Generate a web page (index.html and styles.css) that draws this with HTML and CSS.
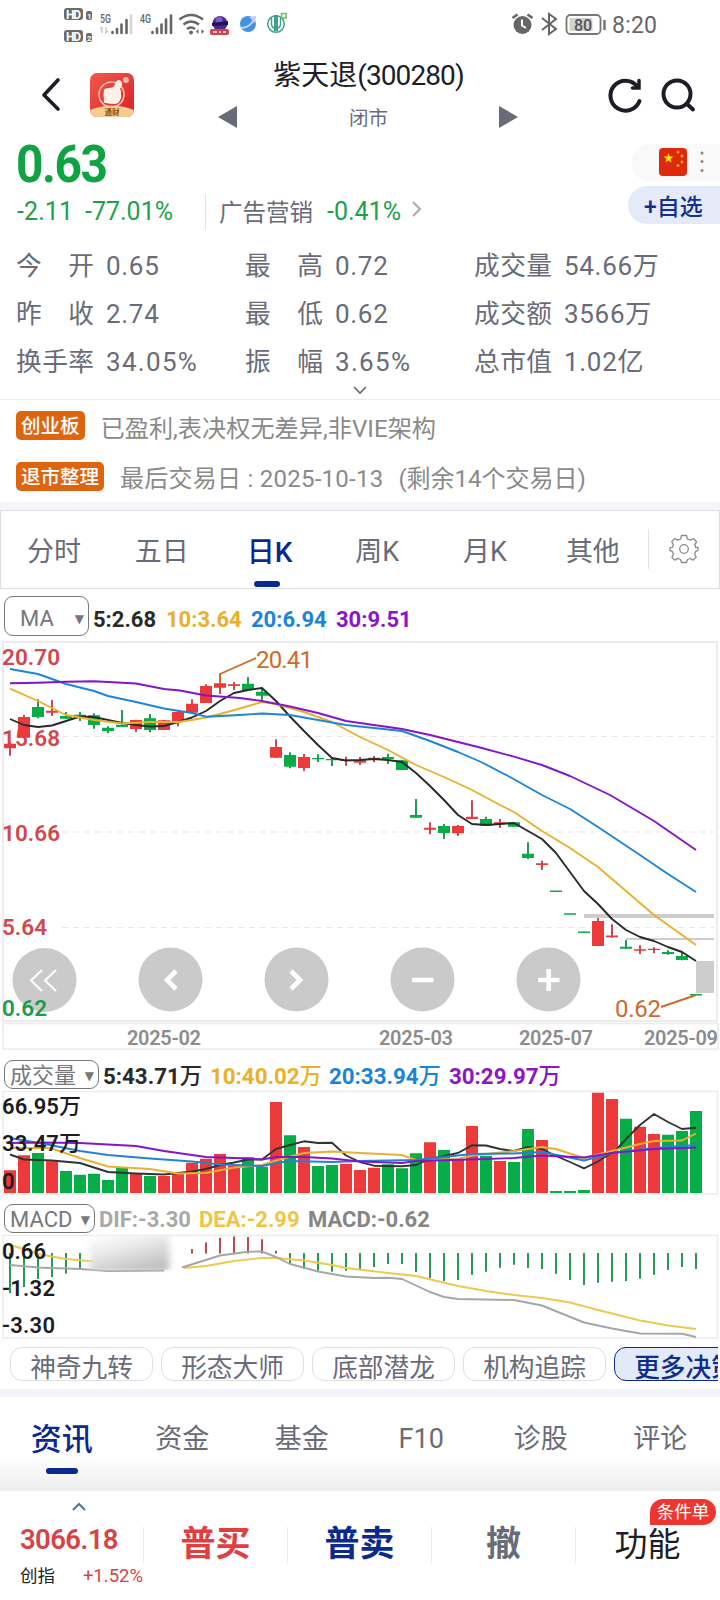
FILE: index.html
```html
<!DOCTYPE html>
<html lang="zh-CN">
<head>
<meta charset="utf-8">
<title>紫天退(300280)</title>
<link rel="stylesheet" href="styles.css">
</head>
<body>
<div class="app">
  <div class="status">
    <svg class="status-left" width="230" height="50" viewBox="60 0 230 50">
      <g fill="#6b6b6b"><rect x="64" y="8" width="19" height="12" rx="3"/><rect x="64" y="30" width="19" height="12" rx="3"/><rect x="86" y="11" width="6" height="9" rx="2"/><rect x="86" y="33" width="6" height="9" rx="2"/></g>
      <g class="st" font-weight="700" fill="#fff"><text x="66" y="18.500" font-size="12" textLength="15">HD</text><text x="66" y="40.500" font-size="12" textLength="15">HD</text><text x="87" y="18.500" font-size="8">1</text><text x="87" y="40.500" font-size="8">2</text></g>
      <g class="st" fill="#666" font-weight="500" font-size="12"><text x="100" y="23" textLength="11" lengthAdjust="spacingAndGlyphs">5G</text><text x="140" y="23" textLength="11" lengthAdjust="spacingAndGlyphs">4G</text></g>
      <g stroke="#666" stroke-width="2.600" stroke-linecap="round"><path d="M112.500 32v1M117 29v4M121.500 24.500v8.500M126.500 20v13M152.500 32v1M157 28.500v4.500M161.500 24.500v8.500M166 19.500v13.500M171 15.500v17.500"/><path stroke="#d6d6d6" d="M131 15.500v17.500"/></g>
      <path d="M102 27v6m-2-4 2-2M106 27v6l2-2" stroke="#ccc" stroke-width="1.500" fill="none"/>
      <g fill="none" stroke="#666" stroke-width="2.600"><path d="M179.500 19.500q11.500-9 23.500 0M183.500 24.500q7.500-6 15.500 0M187 29q4-3 8 0"/></g><circle cx="191" cy="32.500" r="2" fill="#666"/><path d="M198.500 29v5l-2.500-2.500zM201.500 29v5l2.500-2.500z" fill="#666"/>
      <circle cx="220" cy="23.500" r="7.500" fill="#4a2c91"/><circle cx="219" cy="20" r="3.500" fill="#7a5fc0"/><path d="M212 23l16-2v4l-16 1z" fill="#221450"/><rect x="210" y="29" width="19" height="6" rx="2" fill="#d63e4a"/><path d="M213 32h4M219 32h2M223 32h3" stroke="#fff" stroke-width="1.500"/>
      <circle cx="248" cy="24" r="8" fill="#4290e8"/><path d="M241 28q9 0 14-10" stroke="#bfe0ff" stroke-width="1.800" fill="none"/><path d="M249 17l7-1-1 7z" fill="#cfc5f4"/>
      <circle cx="276" cy="24" r="8.300" fill="none" stroke="#3fa08e" stroke-width="1.500"/><path d="M271.500 18v6q0 3 2.500 4M280.500 18v6q0 3-2.500 4" stroke="#3fa08e" stroke-width="1.400" fill="none"/><path d="M276 15v16" stroke="#3fa08e" stroke-width="4"/><rect x="281.500" y="13.500" width="4.500" height="4.500" fill="none" stroke="#6cc24a" stroke-width="1.500"/>
    </svg>
    <svg class="status-right" width="150" height="50" viewBox="510 0 150 50">
      <circle cx="522.500" cy="25" r="9" fill="#666"/><path d="M522 19.500v6l4 2.500" fill="none" stroke="#fff" stroke-width="2"/><path d="M512.500 18l5-3.500M532.500 18l-5-3.500" stroke="#666" stroke-width="2.600"/>
      <path d="M542 18l14 11-7 5V14l7 5-14 11" fill="none" stroke="#666" stroke-width="2"/>
      <rect x="566.500" y="15" width="34" height="19" rx="4" fill="#fff" stroke="#777" stroke-width="1.800"/><rect x="569.500" y="18" width="23" height="13" fill="#d2d2d2"/><path d="M604.500 20v10" stroke="#777" stroke-width="2.500"/>
      <text class="st" x="574" y="30.500" font-size="16" font-weight="500" fill="#555">80</text>
      <text class="st" x="612" y="33" font-size="23" fill="#666" textLength="45">8:20</text>
    </svg>
  </div>

  <header class="header">
    <div class="header-left">
      <svg width="20" height="36" viewBox="0 0 20 36"><path d="M17 3 3 18l14 14" fill="none" stroke="#1d1d28" stroke-width="3.600" stroke-linecap="round" stroke-linejoin="round"/></svg>
      <svg class="logo" width="44" height="44" viewBox="0 0 44 44"><defs><clipPath id="lc"><rect width="44" height="44" rx="7"/></clipPath><linearGradient id="lg" x2="1" y2="1"><stop stop-color="#f2594a"/><stop offset="1" stop-color="#dc1f28"/></linearGradient></defs><g clip-path="url(#lc)"><rect width="44" height="44" fill="url(#lg)"/><circle cx="21.500" cy="21.500" r="12.500" fill="none" stroke="#f9c0b0" stroke-width="1.600"/><path d="M0 37q22-9 44 0v8H0z" fill="#f3cd92"/><path d="M14 17q1-2 5-2 5 0 6-4 1-4 4-4 4 1 3 5l-2 4q2 2 1 5 1 4-1 6-1 4-6 4-5 0-8-1-3 0-2-4-1-4 0-9z" fill="#fff0e8"/><circle cx="36" cy="7" r="3" fill="#f9b9ac"/><text x="14.500" y="41.500" font-size="7.500" fill="#8b4d12" font-weight="700" class="cj">通财</text></g></svg>
    </div>
    <svg width="20" height="24" class="arrow" viewBox="0 0 20 24"><path d="M0 12 19 1v22z" fill="#696b78"/></svg>
    <div class="header-mid"><div class="title">紫天退<span>(300280)</span></div><div class="market">闭市</div></div>
    <svg width="20" height="24" class="arrow" viewBox="0 0 20 24"><path d="M19 12 0 1v22z" fill="#696b78"/></svg>
    <svg class="actions" width="90" height="40" viewBox="606 75 90 40"><g fill="none" stroke="#1d1d28" stroke-width="4" stroke-linecap="round"><path d="M639.500 100a15 15 0 1 1-2.500-15"/><path d="M639 79.500v7.500h-6.500" stroke-width="3.500"/><circle cx="677" cy="93" r="13.500"/><path d="M687 103l6 5.500"/></g></svg>
  </header>

  <section class="quote">
    <div class="quote-left">
      <div class="price">0.63</div>
      <div class="change"><span class="delta">-2.11</span><span class="pct">-77.01%</span><span class="sector">广告营销</span><span class="sector-pct">-0.41%</span><svg width="10" height="16" viewBox="0 0 10 16"><path d="M1 1l7 7-7 7" fill="none" stroke="#aaa" stroke-width="2"/></svg></div>
    </div>
    <div class="quote-right">
      <div class="flag-pill"><svg width="28" height="28" viewBox="0 0 28 28"><rect width="28" height="28" rx="4" fill="#de2910"/><path d="M9.500 5l1.300 3.400 3.600.2-2.800 2.300.9 3.500-3-2-3 2 .9-3.500-2.800-2.300 3.600-.2z" fill="#ffde00"/><g fill="#f9a51b"><circle cx="19" cy="4" r="1.500"/><circle cx="23" cy="8" r="1.500"/><circle cx="23" cy="14" r="1.500"/><circle cx="19" cy="17.500" r="1.500"/></g></svg><svg width="4" height="22" viewBox="0 0 4 22"><g fill="#888"><circle cx="2" cy="2" r="1.500"/><circle cx="2" cy="10.500" r="1.500"/><circle cx="2" cy="19.500" r="1.500"/></g></svg></div>
      <div class="watch">+自选</div>
    </div>
  </section>

  <section class="details">
    <div class="cell"><b><i>今</i><i>开</i></b><span>0.65</span></div><div class="cell"><b><i>最</i><i>高</i></b><span>0.72</span></div><div class="cell"><b><i>成</i><i>交</i><i>量</i></b><span>54.66万</span></div>
    <div class="cell"><b><i>昨</i><i>收</i></b><span>2.74</span></div><div class="cell"><b><i>最</i><i>低</i></b><span>0.62</span></div><div class="cell"><b><i>成</i><i>交</i><i>额</i></b><span>3566万</span></div>
    <div class="cell"><b><i>换</i><i>手</i><i>率</i></b><span class="wide">34.05%</span></div><div class="cell"><b><i>振</i><i>幅</i></b><span class="wide">3.65%</span></div><div class="cell"><b><i>总</i><i>市</i><i>值</i></b><span>1.02亿</span></div>
  </section>
  <div class="expand"><svg width="14" height="9" viewBox="0 0 14 9"><path d="M1 1l6 6 6-6" fill="none" stroke="#666" stroke-width="1.600"/></svg></div>

  <section class="notes">
    <div class="note"><span class="tag">创业板</span><span class="note-a">已盈利,表决权无差异,非VIE架构</span></div>
    <div class="note"><span class="tag">退市整理</span><span class="note-b">最后交易日 : 2025-10-13</span><span class="note-c">(剩余14个交易日)</span></div>
  </section>

  <nav class="periods">
    <span>分时</span><span>五日</span><span class="on">日K</span><span>周K</span><span>月K</span><span>其他</span>
    <div class="gear"><svg width="30" height="30" viewBox="-15 -15 30 30"><g fill="none" stroke="#8a8a8a" stroke-width="1.300" stroke-linejoin="round"><path d="M-2.500-13.500h5l1 3.500 2.800 1.200 3.300-1.700 2.900 3.300-1.800 3 .9 2.500 2.400.2v3l-2.600 1.200-.7 2.500 1.500 3.100-3.200 2.800-2.900-1.600-2.700 1-.9 3h-5l-1-3-2.700-1.100-2.900 1.700-3-2.900 1.500-3-.9-2.500-2.500-1v-3l2.400-.4 1-2.500-1.700-3.100 2.900-3.100 3.300 1.600 2.700-1.200z"/><circle r="4.300"/></g></svg></div>
  </nav>

  <div class="legend legend-ma"><span class="select">MA<em>▼</em></span><span class="k">5:2.68</span><span class="y">10:3.64</span><span class="b">20:6.94</span><span class="p">30:9.51</span></div>

  <svg class="chart" width="720" height="412" viewBox="0 640 720 412">
    <g fill="none" stroke="#ececec" stroke-width="2"><path d="M3 642H717V1021H3z"/><path d="M3 1023.500H718V1049H3z" stroke-width="1.500"/></g>
    <path d="M62 736.500H714M62 832H714M62 927.500H714" stroke="#f1e4e4" stroke-width="1.200" stroke-dasharray="6 5"/>
    <g fill="#cacaca" ><circle cx="44.500" cy="980" r="32"/><circle cx="170.500" cy="979.500" r="32"/><circle cx="296.500" cy="979.500" r="32"/><circle cx="422.500" cy="979.500" r="32"/><circle cx="548.500" cy="979.500" r="32"/></g>
    <g fill="none" stroke="#fff" stroke-width="4.600"><path d="M42 970L31 980.500l11 10.500M56 970l-11 10.500 11 10.500" stroke-width="2"/><path d="M176 971l-9 9 9 9M291 971l9 9-9 9M412 980h21.500M538 980h21.500M548.700 969v22"/></g>
    <g class="lab" font-size="22.500" fill="#d2474c"><text x="2" y="665" textLength="58">20.70</text><text x="2" y="746" textLength="58">15.68</text><text x="2" y="841" textLength="58">10.66</text><text x="2" y="935" textLength="45">5.64</text><text x="2" y="1016" textLength="45" fill="#1d9a4d">0.62</text></g>
    <path d="M584 916H714" stroke="#cdcdcd" stroke-width="4"/><path d="M626 939H714" stroke="#cdcdcd" stroke-width="2"/><rect x="696" y="961" width="18" height="32" fill="#cdcdcd"/>
    <g fill="none" stroke-width="1.900">
      <path stroke="#c4434a" d="M10 742.700V755.700M24 715V738M52 700V716M136 719.700V732M164 720V730M178 711.300V726.300M192 699.300V713M206 684.300V703M220 673.700V694M234 682V690M276 739.300V758M304 754V771M346 756.700V765.700M360 757V765M374 756V762.300M430 822.300V834.300M458 825V836M472 800.300V819M500 819V828M542 860.700V870M598 918V946M612 924.300V937.700M640 945.300V954M654 947.300V953.300"/>
      <path stroke="#1d9350" d="M38 699.300V718.300M66 712V719M80 712V721M94 713.300V728.700M108 726.300V733.300M122 710V727M150 714V732.300M248 677V690M262 688.300V700M290 752.300V768.300M318 754.300V762M332 757.300V766M388 753.700V764M402 760V770M416 799V817.700M444 824V839M486 816.700V825.700M514 822V827M528 842.300V859M626 940V949M668 950.300V954.700M682 952.700V960.300"/>
      <g stroke-width="12"><path stroke="#ec3a3a" d="M10 743.700V748.300M24 717V737.700M52 710.700V712.700M136 720V729M164 720.300V730M178 712V722M192 703.700V712.700M206 686V703M220 683.300V687.700M234 684.300V686M276 747V757.700M304 757V768M346 759.700V761M360 760.300V762.700M374 757.700V760M430 827.700V829.700M458 826V833.300M472 816.700V819M500 822.300V824M542 863.300V865M598 921V946M612 935.500V937.300M640 949.300V950.700M654 948.700V950"/>
      <path stroke="#06ac46" d="M38 707V717M66 716V718.700M80 714.700V718.300M94 715.300V725M108 727.700V731M122 724.700V727M150 718.300V730M248 683.700V690M262 691.700V695.700M290 755V766.700M318 758V759.300M332 759V760.300M388 757V759M402 760.300V770M416 815V817.700M444 826V833M486 819V825.700M514 822.300V826.700M528 853.700V858M556 890.500V892M570 913.300V914.800M584 931.500V933M626 946.700V948.700M668 952V954M682 956V960M696 994V995.500"/></g>
    </g>
    <g class="ma">
      <path stroke="#292929" d="M10 719L24 725 38 727 52 725.500 66 721 80 716.500 94 717 108 720 122 723 136 725 150 726.500 164 726 178 722 192 717.500 206 711 220 701 234 693 248 690 262 688 276 701 290 716.500 304 731 318 745 332 758 346 760.500 360 760 374 759 388 760 402 762 416 773 430 786 444 800 458 815 472 824 486 825 500 824 514 823 528 831 542 839 556 853 570 872 584 891 598 904 612 919 626 930 640 937 654 941 668 947 682 952 696 961"/>
      <path stroke="#e9b02b" d="M10 688.700L38 701 66 715 94 720 122 723.500 150 722 178 722 192 720 206 717.500 220 714 240 708.500 262 702 276 704 304 712 332 722 360 737 388 750 416 765 444 777 472 790 500 805 514 812 542 831 570 848 598 867 626 891 654 915 682 935 696 945"/>
      <path stroke="#1e84d8" d="M10 669L38 674 66 684 94 691 108 696 136 702 164 708.500 192 713 206 716.700 240 715 262 713.500 290 715 318 720 346 725 374 728 402 731 430 741 458 752 480 761.500 510 777 542 795 570 809 598 827 640 855 668 874 696 892"/>
      <path stroke="#8415c8" d="M10 683.300L38 682.700 66 681.700 94 681.300 122 682.700 136 683.500 164 689 180 690.500 206 695.500 240 698 262 701 290 706.500 318 713 346 721 374 725 402 729 430 735 458 742 480 747.500 514 756.700 542 765 570 776 610 795 654 821 696 850"/>
      <path stroke="#cc6a2b" d="M220 684V674L256 658M661 1007L696 995"/>
    </g>
    <g class="st" font-size="24" fill="#cf6a28"><text x="256" y="668" textLength="57">20.41</text><text x="615" y="1017" textLength="46">0.62</text></g>
    <g class="lab" font-size="20" fill="#8c8c8c"><text x="127" y="1045" textLength="74">2025-02</text><text x="379" y="1045" textLength="74">2025-03</text><text x="519" y="1045" textLength="74">2025-07</text><text x="644" y="1045" textLength="74">2025-09</text></g>
  </svg>

  <div class="legend legend-vol"><span class="select">成交量<em>▼</em></span><span class="k">5:43.71<i>万</i></span><span class="y">10:40.02<i>万</i></span><span class="b">20:33.94<i>万</i></span><span class="p">30:29.97<i>万</i></span></div>
  <svg class="chart" width="720" height="106" viewBox="0 1090 720 106">
    <path d="M3 1091.500H717.500V1194H3z" fill="none" stroke="#ececec" stroke-width="1.500"/>
    <g stroke-width="12"><path stroke="#ec3a3a" d="M10 1193V1170.300M24 1193V1155.300M52 1193V1161.300M136 1193V1173M164 1193V1176M178 1193V1172.700M192 1193V1162.700M206 1193V1158.700M220 1193V1154M234 1193V1165.700M276 1193V1102M304 1193V1147M346 1193V1163.700M360 1193V1170M374 1193V1167.700M430 1193V1142.300M458 1193V1160M472 1193V1126M500 1193V1161M542 1193V1140M598 1193V1092.700M612 1193V1099M640 1193V1126.700M654 1193V1134"/>
    <path stroke="#06ac46" d="M38 1193V1153M66 1193V1171M80 1193V1174.700M94 1193V1173.700M108 1193V1180M122 1193V1168M150 1193V1176M248 1193V1157.300M262 1193V1166.700M290 1193V1135.300M318 1193V1166M332 1193V1165M388 1193V1164.300M402 1193V1168.300M416 1193V1153.300M444 1193V1150M486 1193V1155.700M514 1193V1162M528 1193V1129M556 1193V1191M570 1193V1191M584 1193V1190M626 1193V1118.700M668 1193V1134.700M682 1193V1131M696 1193V1111"/></g>
    <g class="ma">
      <path stroke="#333" d="M10 1154.500L24 1159.500 52 1160.500 80 1163 108 1172 136 1173.500 164 1174.500 192 1171.500 206 1169 220 1165 234 1162.500 248 1159.500 262 1159.500 276 1149 290 1145 304 1141.300 318 1143 332 1142.700 346 1155.500 360 1162 374 1165.700 402 1166.300 416 1165 430 1159 444 1156 458 1153 472 1145.300 486 1145.500 500 1149 514 1151 528 1147 542 1149 556 1156 570 1162 584 1168.300 598 1161.500 616 1150 626 1139 640 1125 654 1114 668 1122 682 1129 696 1127.700"/>
      <path stroke="#eab033" d="M10 1148L50 1148 80 1158 108 1166.500 150 1169 178 1173.500 206 1173 234 1167.500 262 1165 276 1160.500 304 1153 332 1151.500 360 1153 402 1155 416 1160 458 1159 472 1155.500 514 1151 528 1149 542 1147 556 1149 584 1158 612 1151 640 1144 654 1141 682 1140.500 696 1133.500"/>
      <path stroke="#2482d6" d="M10 1138L50 1145 80 1151 108 1155 150 1158.500 192 1161.500 220 1164.500 262 1166 276 1163 290 1161 332 1162 360 1161 416 1160 444 1157 472 1154 514 1153.500 542 1152 584 1160.500 612 1153 654 1148 696 1145"/>
      <path stroke="#8415c8" d="M10 1143L38 1142.500 80 1143 136 1146 164 1151 206 1157 248 1158.500 262 1159.500 276 1157 304 1157 332 1158.500 360 1161.500 402 1163 416 1161 486 1159 514 1158 542 1155.500 584 1157.500 612 1153 654 1149 696 1147.500"/>
    </g>
    <g class="lab" font-size="22" fill="#1b1b22"><text x="2" y="1114" textLength="79">66.95<tspan font-weight="500">万</tspan></text><text x="2" y="1151" textLength="79">33.47<tspan font-weight="500">万</tspan></text><text x="2" y="1189">0</text></g>
  </svg>

  <div class="legend legend-macd"><span class="select">MACD<em>▼</em></span><span class="g1">DIF:-3.30</span><span class="y2">DEA:-2.99</span><span class="g2">MACD:-0.62</span></div>
  <svg class="chart" width="720" height="106" viewBox="0 1234 720 106">
    <defs><linearGradient id="haze" x2=".6" y2="1"><stop stop-color="#fff" stop-opacity=".9"/><stop offset=".5" stop-color="#e6e6e6"/><stop offset="1" stop-color="#c2c2c2"/></linearGradient><filter id="soft" x="-20%" y="-20%" width="140%" height="140%"><feGaussianBlur stdDeviation="3.500 1.500"/></filter></defs>
    <path d="M3 1235.500H717.500V1338H3z" fill="none" stroke="#ececec" stroke-width="1.500"/>
    <g fill="none" stroke-width="1.900"><path stroke="#1d9350" d="M10 1253V1293M24 1253V1287M38 1253V1279M52 1253V1277M66 1253V1273.500M80 1253V1269M290 1253V1263.700M304 1253V1269M318 1253V1270.700M332 1253V1271.700M346 1253V1270.700M360 1253V1270M374 1253V1267M388 1253V1264M402 1253V1264M416 1253V1272M430 1253V1278M444 1253V1281M458 1253V1280M472 1253V1274.700M486 1253V1271.700M500 1253V1267.700M514 1253V1264.700M528 1253V1268M542 1253V1269M556 1253V1273.700M570 1253V1280M584 1253V1285M598 1253V1282.700M612 1253V1281.700M626 1253V1281M640 1253V1278.700M654 1253V1274.700M668 1253V1270M682 1253V1267M696 1253V1269"/>
    <path stroke="#b5404a" d="M192 1253.500V1249M206 1253.500V1242.500M220 1253.500V1237.700M234 1253.500V1236.500M248 1253.500V1237M262 1253.500V1239.300M276 1253.500V1250.700"/></g>
    <g class="ma">
      <path stroke="#ecc94f" d="M10 1245L24 1249 38 1254 66 1259 94 1261.500M184 1268L206 1266 234 1261 262 1258 276 1258 304 1260.500 332 1265 346 1268 388 1273 416 1276 458 1286 486 1291 514 1295 542 1298 570 1302.500 598 1310 640 1320.500 668 1325.500 696 1329"/>
      <path stroke="#a6a6a6" d="M10 1265L38 1267.500 80 1269 108 1271 164 1270.500M182 1267.500L220 1255.500 248 1251.700 262 1251.500 276 1257 290 1264 318 1271.500 346 1276.500 374 1278 388 1277.800 402 1279 430 1292 444 1297 458 1299 514 1300 542 1305.500 584 1322.500 612 1328.500 640 1333.500 682 1333.800 696 1337"/>
    </g>
    <rect x="90" y="1236" width="79" height="34" fill="url(#haze)" filter="url(#soft)"/>
    <g class="lab" font-size="22" fill="#1b1b22"><text x="2" y="1259" textLength="44">0.66</text><text x="2" y="1296" textLength="53">-1.32</text><text x="2" y="1333" textLength="53">-3.30</text></g>
  </svg>

  <div class="chips"><span>神奇九转</span><span>形态大师</span><span>底部潜龙</span><span>机构追踪</span><span class="more">更多决策</span></div>

  <nav class="info"><span class="on">资讯</span><span>资金</span><span>基金</span><span>F10</span><span>诊股</span><span>评论</span></nav>

  <footer class="bar">
    <div class="index"><svg width="14" height="9" viewBox="0 0 14 9"><path d="M1 8l6-6 6 6" fill="none" stroke="#587590" stroke-width="2"/></svg><div class="index-val">3066.18</div><div class="index-row"><span>创指</span><em>+1.52%</em></div></div>
    <div class="act buy">普买</div><div class="act sell">普卖</div><div class="act cancel">撤</div><div class="act func">功能<span class="badge">条件单</span></div>
  </footer>
</div>
</body>
</html>
```
FILE: styles.css
```css
* { box-sizing: border-box; }
body { margin: 0; background: #fff; font-family: Roboto, "Noto Sans CJK SC", sans-serif; color: #696b78; }
.app { width: 720px; height: 1600px; overflow: hidden; display: flex; flex-direction: column; }
.app > * { flex: none; }
svg { display: block; }
i, em, b { font-style: normal; font-weight: inherit; }
.st, .lab { font-family: Roboto, "Noto Sans CJK SC", sans-serif; }
.cj { font-family: "Noto Sans CJK SC", sans-serif; }
.lab { font-weight: 600; }
.ma path { fill: none; stroke-width: 1.9; stroke-linejoin: round; }

.status { height: 50px; display: flex; justify-content: space-between; padding: 0 60px; }

.header { height: 90px; display: flex; align-items: flex-start; padding-left: 41px; }
.header-left { display: flex; align-items: center; gap: 29px; width: 177px; padding-top: 23px; }
.arrow { margin-top: 55px; }
.header-mid { width: 261px; text-align: center; }
.title { font-size: 28px; line-height: 34px; padding-top: 9px; color: #1d1d28; white-space: nowrap; }
.title span { letter-spacing: -0.9px; }
.market { font-size: 19.5px; line-height: 26px; margin-top: 13px; }
.actions { margin: 26px 0 0 87px; }

.quote { height: 102px; display: flex; justify-content: space-between; padding-left: 16px; }
.price { height: 50px; font-size: 51px; line-height: 49px; font-weight: 700; color: #0fa344; letter-spacing: -1.6px; transform: scaleX(0.94); transform-origin: left; }
.change { display: flex; align-items: center; height: 36px; font-size: 25px; line-height: 38px; color: #1da04c; white-space: nowrap; margin-top: 4px; }
.delta { width: 69px; padding-left: 1px; letter-spacing: 0.1px; }
.pct { width: 120px; letter-spacing: 0; }
.sector { width: 121px; font-size: 23.5px; color: #696b78; border-left: 1px solid #e4e4e8; padding-left: 13px; height: 36px; }
.change svg { margin-left: 10px; margin-bottom: 6px; }
.sector-pct { letter-spacing: 0; width: 76px; padding-left: 1px; }
.quote-right { display: flex; flex-direction: column; align-items: flex-end; gap: 4px; padding-top: 4px; }
.flag-pill { width: 88px; height: 38px; border-radius: 19px 0 0 19px; background: #f9f9f9; display: flex; align-items: center; padding-left: 27px; padding-bottom: 2px; gap: 13px; }
.watch { width: 92px; height: 38px; border-radius: 19px 0 0 19px; background: #e4eaf7; color: #14308c; font-size: 23px; font-weight: 500; line-height: 43px; padding-left: 16px; white-space: nowrap; }

.details { display: grid; grid-template-columns: 229px 229px 1fr; grid-auto-rows: 48px; padding-left: 16px; height: 144px; font-size: 26px; line-height: 48px; }
.cell { display: flex; align-items: baseline; white-space: nowrap; }
.cell b { display: flex; justify-content: space-between; width: 78px; font-size: 25.7px; }
.cell span { margin-left: 12px; letter-spacing: 0.7px; }
.cell .wide { letter-spacing: 1.3px; }
.expand { height: 14px; border-bottom: 1px solid #ececef; display: flex; justify-content: center; }

.notes { height: 110px; padding: 11px 16px 0; border-bottom: 8px solid #f5f6f9; color: #8a8a8a; font-size: 24px; }
.note { display: flex; align-items: flex-start; height: 51px; white-space: nowrap; }
.tag { background: #dd650f; color: #fff; font-size: 19.5px; font-weight: 500; height: 29px; line-height: 32px; border-radius: 5px; padding: 0 5px; }
.note-a { margin-left: 16px; line-height: 36px; font-size: 24.2px; }
.note-b { margin-left: 16px; line-height: 35px; letter-spacing: 0.25px; }
.note-c { margin-left: 15px; line-height: 35px; }

.periods { height: 79px; border: 1px solid #dfdfdf; display: flex; align-items: stretch; }
.periods span { width: 107.8px; text-align: center; font-size: 27px; line-height: 83px; position: relative; left: -1px; }
.periods .on { color: #0b2a8e; font-size: 28px; font-weight: 500; }
.periods .on::after { content: ""; position: absolute; left: 38px; bottom: 1px; width: 26px; height: 6px; border-radius: 3px; background: #0b2a8e; }
.gear { flex: 1; margin: 18px 0 19px; border-left: 1px solid #e3e3e3; display: flex; justify-content: center; align-items: center; }

.legend { display: grid; align-items: start; font-size: 22px; font-weight: 700; white-space: nowrap; padding-left: 4px; }
.legend > span { line-height: 28px; }
.legend i { font-weight: 500; }
.legend > .select { font-weight: 400; font-size: 22px; color: #77777c; border: 1px solid #77777c; border-radius: 9px; display: flex; align-items: center; justify-content: space-between; padding: 3px 4px 0 5px; margin-top: 0; }
.select em { font-family: "DejaVu Sans", sans-serif; font-size: 12px; }
.legend-ma { height: 51px; grid-template-columns: 89px 73px 85px 85px 90px; padding-top: 7px; }
.legend-ma > span { margin-top: 10px; }
.legend-ma > .select { width: 85px; height: 40px; padding-left: 15px; padding-top: 6px; }
.legend-vol { height: 38px; grid-template-columns: 99px 107px 119px 120px 120px; padding-top: 8px; font-size: 22.3px; }
.legend-vol > span { margin-top: 2px; }
.legend-vol > .select { width: 95px; height: 29px; }
.legend-macd { height: 38px; grid-template-columns: 95px 100px 109px 130px; padding-top: 8px; }
.legend-macd > span { margin-top: 2px; }
.legend-macd > .select { width: 91px; height: 29px; }
.k { color: #2a2a2a; }
.y { color: #eab02a; }
.b { color: #1b84d8; }
.p { color: #8a16c8; }
.g1 { color: #a9a9a9; }
.y2 { color: #f2c443; }
.g2 { color: #858585; }

.chips { height: 57px; display: flex; gap: 8px; padding: 7px 0 0 10px; margin-right: 2px; overflow: hidden; }
.chips span { flex: none; width: 143px; height: 34px; border: 1px solid #e0e0e3; border-radius: 12px; text-align: center; font-size: 25.7px; line-height: 41px; white-space: nowrap; }
.chips .more { border-color: #0d2b7c; background: #e3e9f6; color: #0e2d8a; font-weight: 500; }

.info { height: 94px; display: flex; padding-left: 3px; background: linear-gradient(#fff 62%, #ededed); box-shadow: 0 -8px 0 #f3f4f9; }
.info span { width: 120px; text-align: center; font-size: 27px; line-height: 85px; position: relative; }
.info .on { font-size: 31px; color: #0b2a8e; font-weight: 500; left: -1px; }
.info .on::after { content: ""; position: absolute; left: 44px; top: 71px; width: 32px; height: 6px; border-radius: 3px; background: #0b2a8e; }

.bar { height: 109px; display: flex; background: #fff; }
.index { width: 143px; padding: 11px 0 0 20px; }
.index svg { margin-left: 52px; }
.index-val { color: #d84245; font-size: 27.5px; font-weight: 600; line-height: 34px; margin-top: 12px; letter-spacing: -0.6px; }
.index-row { display: flex; justify-content: space-between; font-size: 17.5px; line-height: 26px; margin-top: 6px; color: #222; white-space: nowrap; }
.index-row em { color: #d84245; font-size: 18.5px; }
.act { width: 144px; height: 36px; margin-top: 36px; border-left: 1px solid #ececef; font-size: 35px; font-weight: 700; line-height: 36px; text-align: center; position: relative; }
.buy { color: #e03f42; }
.sell { color: #0b2a8e; }
.func { color: #1d1d28; font-weight: 400; font-size: 33px; }
.badge { position: absolute; left: 74px; top: -28px; width: 66px; height: 26px; border-radius: 13px 13px 13px 0; background: #ee3630; color: #fff; font-size: 17.5px; line-height: 27px; }
```
